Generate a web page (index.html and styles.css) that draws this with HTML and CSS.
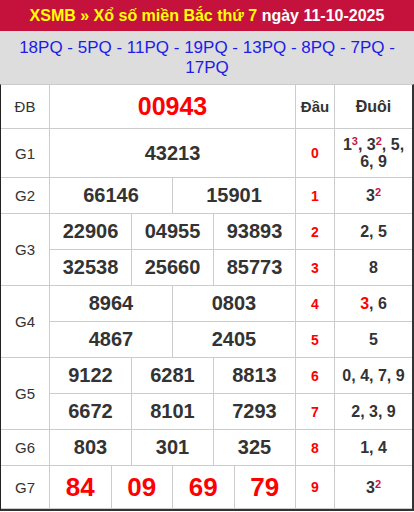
FILE: index.html
```html
<!DOCTYPE html>
<html lang="vi">
<head>
<meta charset="utf-8">
<title>XSMB 11-10-2025</title>
<link rel="stylesheet" href="styles.css">
</head>
<body>
<div class="result">
  <div class="title"><span class="hl">XSMB » Xổ số miền Bắc thứ 7</span> ngày 11-10-2025</div>
  <div class="codes">18PQ - 5PQ - 11PQ - 19PQ - 13PQ - 8PQ - 7PQ - 17PQ</div>
  <div class="board">
    <div class="cell label">ĐB</div>
    <div class="cell num n1 special">00943</div>
    <div class="cell head">Đầu</div>
    <div class="cell head tail">Đuôi</div>

    <div class="cell label">G1</div>
    <div class="cell num n1">43213</div>
    <div class="cell dau">0</div>
    <div class="cell tail"><span>1<sup>3</sup>, 3<sup>2</sup>, 5, 6, 9</span></div>

    <div class="cell label">G2</div>
    <div class="cell num n2">66146</div>
    <div class="cell num n2">15901</div>
    <div class="cell dau">1</div>
    <div class="cell tail"><span>3<sup>2</sup></span></div>

    <div class="cell label tall">G3</div>
    <div class="cell num n3">22906</div>
    <div class="cell num n3">04955</div>
    <div class="cell num n3">93893</div>
    <div class="cell dau">2</div>
    <div class="cell tail"><span>2, 5</span></div>
    <div class="cell num n3">32538</div>
    <div class="cell num n3">25660</div>
    <div class="cell num n3">85773</div>
    <div class="cell dau">3</div>
    <div class="cell tail"><span>8</span></div>

    <div class="cell label tall">G4</div>
    <div class="cell num n2">8964</div>
    <div class="cell num n2">0803</div>
    <div class="cell dau">4</div>
    <div class="cell tail"><span><span class="hot">3</span>, 6</span></div>
    <div class="cell num n2">4867</div>
    <div class="cell num n2">2405</div>
    <div class="cell dau">5</div>
    <div class="cell tail"><span>5</span></div>

    <div class="cell label tall">G5</div>
    <div class="cell num n3">9122</div>
    <div class="cell num n3">6281</div>
    <div class="cell num n3">8813</div>
    <div class="cell dau">6</div>
    <div class="cell tail"><span>0, 4, 7, 9</span></div>
    <div class="cell num n3">6672</div>
    <div class="cell num n3">8101</div>
    <div class="cell num n3">7293</div>
    <div class="cell dau">7</div>
    <div class="cell tail"><span>2, 3, 9</span></div>

    <div class="cell label">G6</div>
    <div class="cell num n3">803</div>
    <div class="cell num n3">301</div>
    <div class="cell num n3">325</div>
    <div class="cell dau">8</div>
    <div class="cell tail"><span>1, 4</span></div>

    <div class="cell label">G7</div>
    <div class="cell num n4 big">84</div>
    <div class="cell num n4 big">09</div>
    <div class="cell num n4 big">69</div>
    <div class="cell num n4 big">79</div>
    <div class="cell dau">9</div>
    <div class="cell tail"><span>3<sup>2</sup></span></div>
  </div>
</div>
</body>
</html>
```

FILE: styles.css
```css
* { box-sizing: border-box; }

body {
  margin: 0;
  background: #fff;
  font-family: "Liberation Sans", Arial, sans-serif;
  color: #333;
}

.result {
  width: 414px;
}

.title {
  height: 31px;
  line-height: 31px;
  background: #c5123d;
  color: #fff;
  font-size: 16px;
  font-weight: bold;
  text-align: center;
  white-space: nowrap;
}

.title .hl { color: #ffff00; }

.codes {
  background: #dddddd;
  color: #1c1ce8;
  font-size: 17px;
  line-height: 20px;
  text-align: center;
  padding: 7px 8px 6px;
}

.board {
  display: grid;
  grid-template-columns: 49px repeat(12, 1fr) 39px 77px;
  grid-template-rows: 44px 49px repeat(8, 36px) 43px;
  border-top: 1px solid #ccc;
  border-left: 1px solid #222;
  border-right: 2px solid #333;
  border-bottom: 2px solid #333;
}

.cell {
  display: flex;
  align-items: center;
  justify-content: center;
  text-align: center;
  border-right: 1px solid #ccc;
  border-bottom: 1px solid #ccc;
}

.label {
  font-size: 15px;
  color: #333;
}

.tall { grid-row: span 2; }

.num {
  font-size: 20px;
  font-weight: bold;
  color: #333;
}

.n1 { grid-column: span 12; }
.n2 { grid-column: span 6; }
.n3 { grid-column: span 4; }
.n4 { grid-column: span 3; }

.special {
  font-size: 25px;
  color: #f00;
}

.big {
  font-size: 26px;
  color: #f00;
}

.head {
  font-size: 15px;
  font-weight: bold;
  color: #333;
}

.dau {
  font-size: 14px;
  font-weight: bold;
  color: #f00;
}

.tail {
  border-right: none;
  font-size: 16px;
  font-weight: bold;
  line-height: 17px;
  padding: 0 4px;
  color: #333;
}

.tail sup {
  font-size: 11px;
  line-height: 0;
  vertical-align: 5px;
  color: #c8143c;
}

.hot { color: #f00; }
```
